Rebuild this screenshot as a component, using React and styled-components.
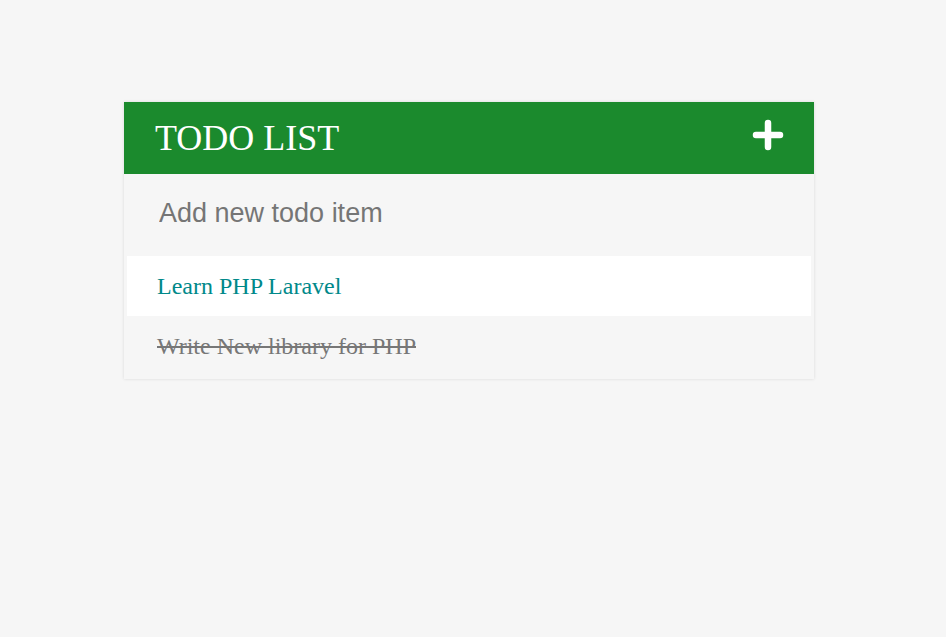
import React from "react";
import styled, { createGlobalStyle } from "styled-components";

const Global = createGlobalStyle`
  html, body { margin: 0; padding: 0; background: #f6f6f6; }
  body { font-family: "Liberation Serif", "Times New Roman", serif; }
`;

const Page = styled.div`
  padding: 102px 0 0 124px;
  min-height: 637px;
  box-sizing: border-box;
`;

const Card = styled.div`
  width: 690px;
  background: #f6f6f6;
  box-shadow: 0 0 3px rgba(0, 0, 0, 0.12);
  padding-bottom: 3px;
`;

const Header = styled.div`
  height: 72px;
  background: #1b8a2d;
  display: flex;
  align-items: center;
  justify-content: space-between;
  padding: 0 30px 0 31px;
  box-sizing: border-box;
`;

const Title = styled.h1`
  margin: 0;
  font-family: "Liberation Serif", "Times New Roman", serif;
  font-weight: normal;
  font-size: 36px;
  color: #ffffff;
  line-height: 1;
`;

const AddButton = styled.button`
  border: 0;
  background: transparent;
  padding: 0;
  margin-bottom: 6px;
  width: 32px;
  height: 32px;
  display: flex;
  align-items: center;
  justify-content: center;
  cursor: pointer;
`;

const InputRow = styled.div`
  height: 82px;
  display: flex;
  align-items: center;
  padding: 0 35px 4px;
  box-sizing: border-box;
`;

const TodoInput = styled.input`
  width: 100%;
  border: 0;
  outline: none;
  background: transparent;
  font-family: "Liberation Sans", Arial, sans-serif;
  font-size: 27px;
  color: #555;
  padding: 0;
  &::placeholder { color: #757575; }
`;

const List = styled.ul`
  list-style: none;
  margin: 0;
  padding: 0 3px;
`;

const Item = styled.li`
  height: 60px;
  display: flex;
  align-items: center;
  padding-left: 30px;
  background: ${(p) => (p.$done ? "transparent" : "#ffffff")};
  color: ${(p) => (p.$done ? "#777777" : "#00898a")};
  text-decoration: ${(p) => (p.$done ? "line-through" : "none")};
  font-family: "Liberation Serif", "Times New Roman", serif;
  font-size: 24px;
`;

const todos = [
  { text: "Learn PHP Laravel", done: false },
  { text: "Write New library for PHP", done: true },
];

export default function App() {
  return (
    <>
      <Global />
      <Page>
        <Card>
          <Header>
            <Title>TODO LIST</Title>
            <AddButton aria-label="add">
              <svg width="32" height="32" viewBox="0 0 32 32">
                <path
                  d="M16 4 V28 M4 16 H28"
                  stroke="#fff"
                  strokeWidth="6.5"
                  strokeLinecap="round"
                  fill="none"
                />
              </svg>
            </AddButton>
          </Header>
          <InputRow>
            <TodoInput placeholder="Add new todo item" />
          </InputRow>
          <List>
            {todos.map((t) => (
              <Item key={t.text} $done={t.done}>
                {t.text}
              </Item>
            ))}
          </List>
        </Card>
      </Page>
    </>
  );
}
